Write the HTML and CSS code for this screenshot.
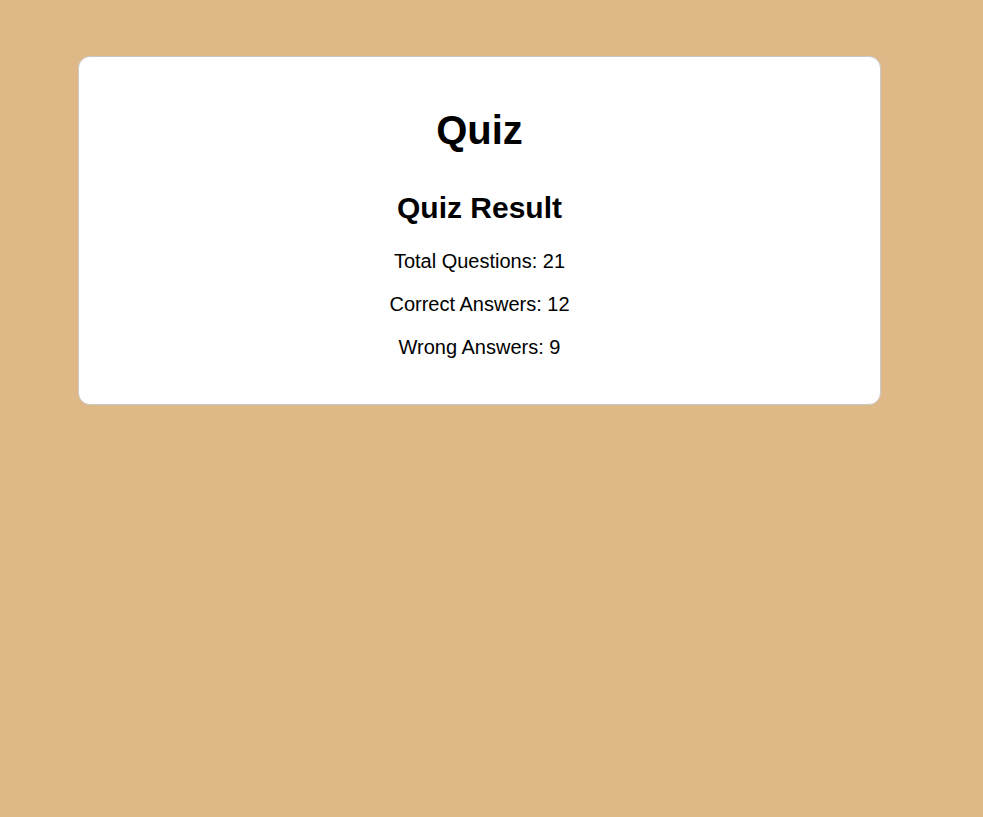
FILE: index.html
```html
<!DOCTYPE html>
<html lang="en">
<head>
<meta charset="utf-8">
<title>Quiz</title>
<link rel="stylesheet" href="styles.css">
</head>
<body>
<div class="card">
  <h1 class="title">Quiz</h1>
  <div class="result">
    <h2 class="result-title">Quiz Result</h2>
    <p class="stat">Total Questions: 21</p>
    <p class="stat">Correct Answers: 12</p>
    <p class="stat">Wrong Answers: 9</p>
  </div>
</div>
</body>
</html>
```

FILE: styles.css
```css
html, body {
  margin: 0;
  padding: 0;
}
body {
  background: #deb887;
  font-family: "Liberation Sans", Arial, sans-serif;
  color: #000;
  padding: 56px 0 0 78px;
  min-height: 100vh;
  box-sizing: border-box;
}
.card {
  box-sizing: border-box;
  width: 803px;
  background: #fff;
  border: 1px solid #c8c8c8;
  border-radius: 12px;
  padding: 25px;
  text-align: center;
}
.title {
  font-size: 40px;
  font-weight: bold;
  margin: 26px 0 38px;
}
.result-title {
  font-size: 30px;
  font-weight: bold;
  margin: 0 0 25px;
}
.stat {
  font-size: 20px;
  margin: 20px 0;
}
```
